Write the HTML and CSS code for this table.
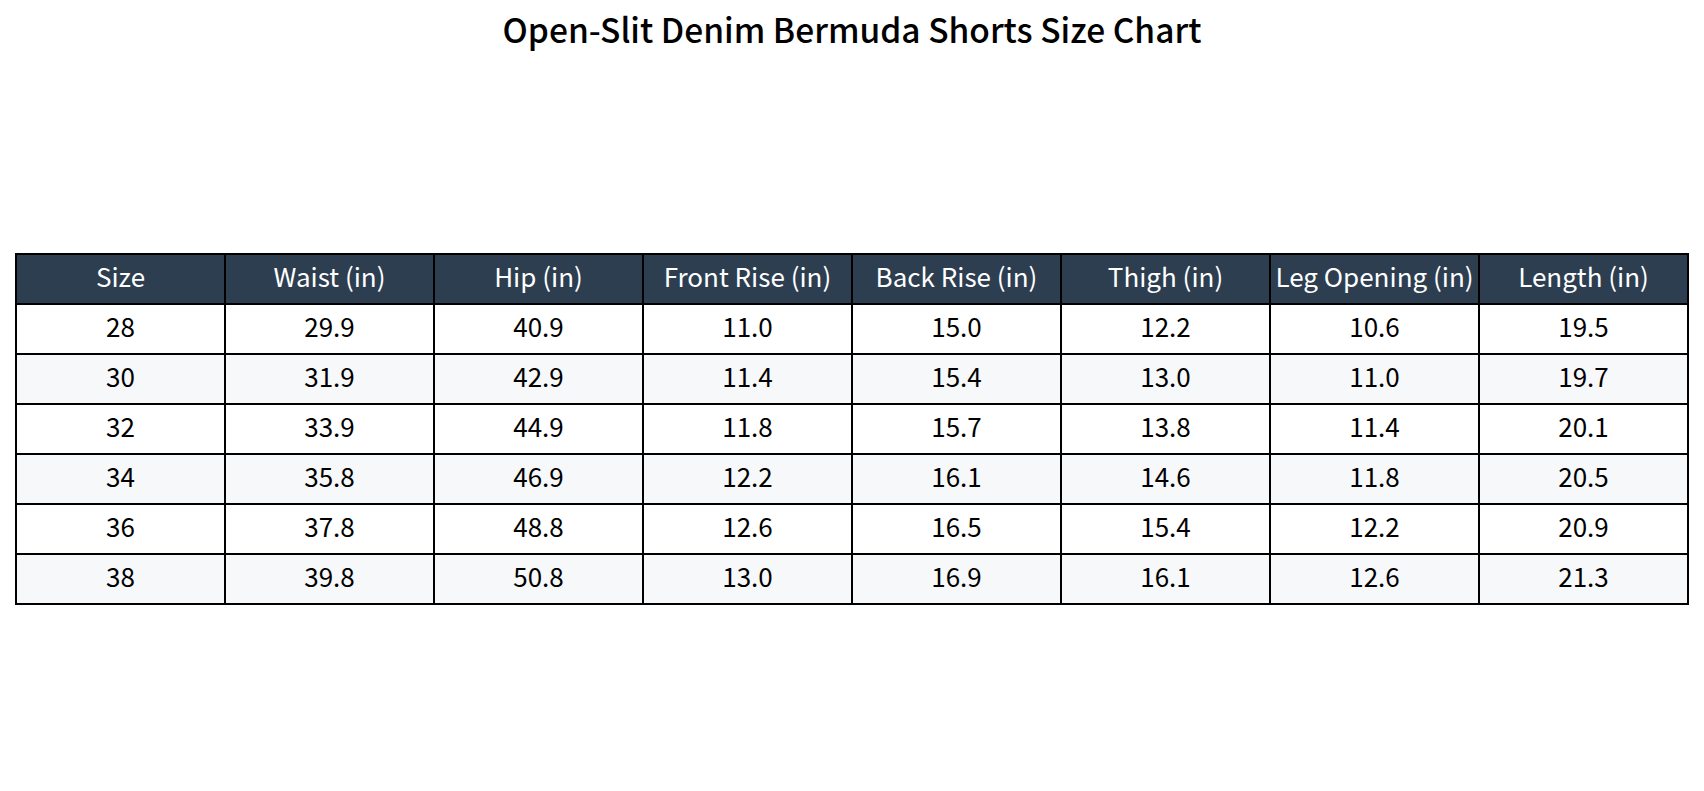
FILE: index.html
```html
<!DOCTYPE html>
<html>
<head>
<meta charset="utf-8">
<link rel="stylesheet" href="styles.css">
</head>
<body>
<div class="page">
  <h1 class="title">Open-Slit Denim Bermuda Shorts Size Chart</h1>
  <div class="wrap">
    <table class="chart">
      <thead>
        <tr><th>Size</th><th>Waist (in)</th><th>Hip (in)</th><th>Front Rise (in)</th><th>Back Rise (in)</th><th>Thigh (in)</th><th>Leg Opening (in)</th><th>Length (in)</th></tr>
      </thead>
      <tbody>
        <tr><td>28</td><td>29.9</td><td>40.9</td><td>11.0</td><td>15.0</td><td>12.2</td><td>10.6</td><td>19.5</td></tr>
        <tr><td>30</td><td>31.9</td><td>42.9</td><td>11.4</td><td>15.4</td><td>13.0</td><td>11.0</td><td>19.7</td></tr>
        <tr><td>32</td><td>33.9</td><td>44.9</td><td>11.8</td><td>15.7</td><td>13.8</td><td>11.4</td><td>20.1</td></tr>
        <tr><td>34</td><td>35.8</td><td>46.9</td><td>12.2</td><td>16.1</td><td>14.6</td><td>11.8</td><td>20.5</td></tr>
        <tr><td>36</td><td>37.8</td><td>48.8</td><td>12.6</td><td>16.5</td><td>15.4</td><td>12.2</td><td>20.9</td></tr>
        <tr><td>38</td><td>39.8</td><td>50.8</td><td>13.0</td><td>16.9</td><td>16.1</td><td>12.6</td><td>21.3</td></tr>
      </tbody>
    </table>
  </div>
</div>
</body>
</html>
```

FILE: styles.css
```css
html, body {
  margin: 0;
  padding: 0;
  background: #ffffff;
}
body {
  font-family: "Noto Sans CJK JP", "Noto Sans", sans-serif;
  color: #000;
}
.page {
  height: 791px;
  display: flex;
  flex-direction: column;
  padding: 0 15px;
  box-sizing: border-box;
}
.title {
  margin: 6px 0 0;
  text-align: center;
  font-size: 33.5px;
  font-weight: 500;
  line-height: 46px;
}
.wrap {
  flex: 1;
  display: flex;
  align-items: center;
  padding-top: 14px;
}
.chart {
  width: 100%;
  border-collapse: collapse;
  table-layout: fixed;
  border: 2px solid #000;
}
.chart tr {
  height: 50px;
}
.chart th, .chart td {
  border: 2px solid #000;
  padding: 0 0 6px;
  text-align: center;
  vertical-align: middle;
  font-size: 26px;
  line-height: 36px;
  font-weight: 400;
}
.chart th {
  background: #2c3e50;
  color: #fff;
}
.chart tbody tr:nth-child(even) td {
  background: #f7f8fa;
}
```
